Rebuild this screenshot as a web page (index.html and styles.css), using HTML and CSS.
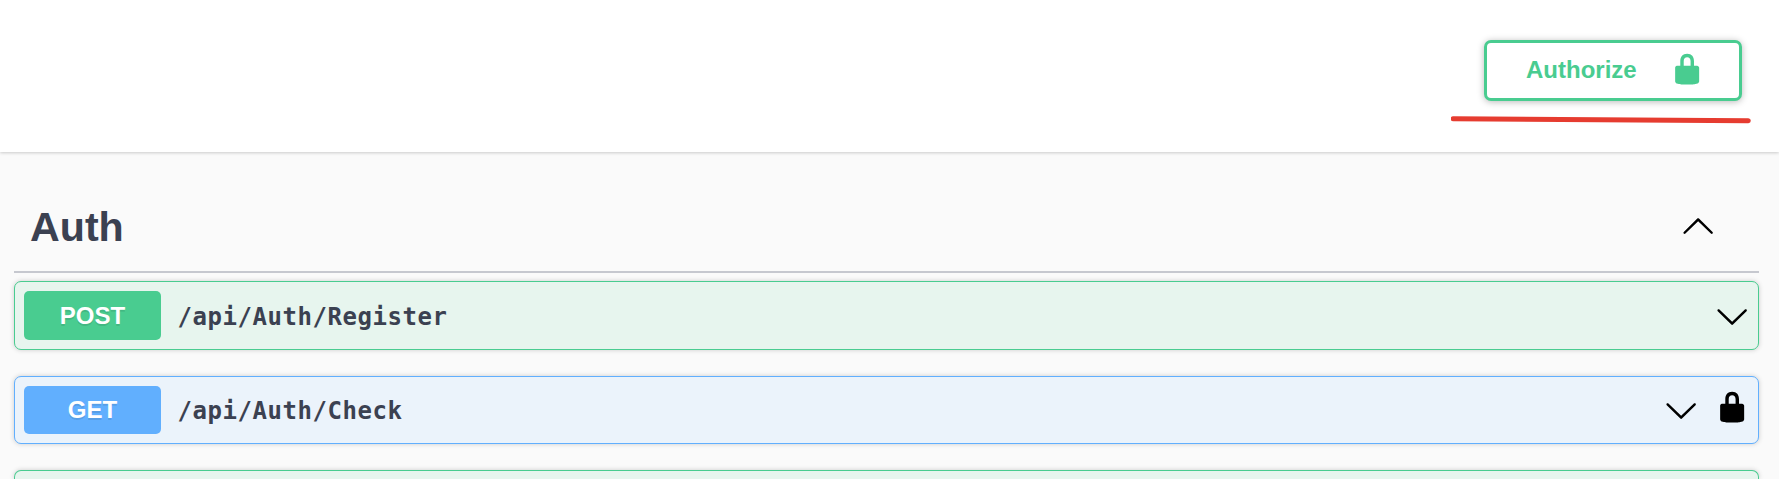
FILE: index.html
```html
<!DOCTYPE html>
<html lang="en">
<head>
<meta charset="utf-8">
<title>API</title>
<link rel="stylesheet" href="styles.css">
</head>
<body>
<svg class="defs" aria-hidden="true">
  <symbol id="lock" viewBox="0 0 20 20"><path d="M15.8 8H14V5.6C14 2.703 12.665 1 10 1 7.334 1 6 2.703 6 5.6V8H4c-.553 0-1 .646-1 1.199V17c0 .549.428 1.139.951 1.307l1.197.387C5.672 18.861 6.55 19 7.1 19h5.8c.549 0 1.428-.139 1.951-.307l1.196-.387c.524-.167.953-.757.953-1.306V9.199C17 8.646 16.352 8 15.8 8zM12 8H8V5.199C8 3.754 8.797 3 10 3c1.203 0 2 .754 2 2.199V8z"/></symbol>
  <symbol id="down" viewBox="0 0 20 20"><path d="M17.418 6.109c.272-.268.709-.268.979 0s.271.701 0 .969l-7.908 7.83c-.27.268-.707.268-.979 0l-7.908-7.83c-.27-.268-.27-.701 0-.969s.709-.268.979 0L10 13.25z"/></symbol>
  <symbol id="up" viewBox="0 0 20 20"><path d="M17.418 14.908c.272.268.709.268.979 0s.271-.701 0-.969l-7.908-7.83c-.27-.268-.707-.268-.979 0l-7.908 7.83c-.27.268-.27.701 0 .969s.709.268.979 0L10 7.767z"/></symbol>
</svg>
<header class="scheme">
  <button class="authorize"><span>Authorize</span><svg class="icon"><use href="#lock"/></svg></button>
  <svg class="underline" viewBox="0 0 300 10"><path d="M2.200 3.800L297.300 5.800"/></svg>
</header>
<main class="section">
  <h3 class="tag"><span>Auth</span><svg class="icon"><use href="#up"/></svg></h3>
  <div class="op post">
    <span class="method">POST</span><span class="path">/api/Auth/Register</span>
    <svg class="icon"><use href="#down"/></svg>
  </div>
  <div class="op get">
    <span class="method">GET</span><span class="path">/api/Auth/Check</span>
    <svg class="icon"><use href="#down"/></svg><svg class="icon lock"><use href="#lock"/></svg>
  </div>
  <div class="op post partial"></div>
</main>
</body>
</html>
```
FILE: styles.css
```css
* { box-sizing: border-box; }
body {
  margin: 0;
  height: 479px;
  overflow: hidden;
  background: #fafafa;
  color: #3b4151;
  font-family: "Liberation Sans", Arial, sans-serif;
}
.defs { position: absolute; width: 0; height: 0; }
.icon { width: 34.3px; height: 34.3px; flex: none; fill: #000; }
.scheme {
  height: 152px;
  padding: 40px 37px 0 0;
  display: flex;
  flex-direction: column;
  align-items: flex-end;
  background: #fff;
  box-shadow: 0 1px 3px rgba(0, 0, 0, .19);
}
.authorize {
  width: 258px;
  height: 61px;
  padding: 0 35px 2px 39px;
  display: flex;
  align-items: center;
  justify-content: space-between;
  border: 3px solid #49cc90;
  border-radius: 7px;
  background: #fff;
  box-shadow: 0 1px 7px rgba(0, 0, 0, .28);
  color: #49cc90;
  font: bold 24px "Liberation Sans", Arial, sans-serif;
}
.authorize .icon { fill: #49cc90; }
.underline {
  width: 300px;
  height: 10px;
  margin: 14px -9px 0 0;
  fill: none;
  stroke: #e63c30;
  stroke-width: 5;
  stroke-linecap: round;
}
.section { padding: 31px 20px 0 14px; }
.tag {
  height: 90px;
  margin: 0 0 8px;
  padding: 0 44px 0 16px;
  display: flex;
  align-items: center;
  justify-content: space-between;
  border-bottom: 2px solid #c6c8cf;
  font-size: 41.2px;
}
.tag .icon { margin-bottom: 3px; }
.op {
  height: 69px;
  margin-bottom: 26px;
  padding: 0 9px;
  display: flex;
  align-items: center;
  border: 1px solid #49cc90;
  border-radius: 7px;
  box-shadow: 0 0 5px rgba(0, 0, 0, .19);
}
.post { background: #e7f5ee; }
.post .icon { margin-top: 2px; }
.get { height: 68px; border-color: #61affe; background: #ebf3fb; }
.partial {
  height: 9px;
  margin: 0;
  border-bottom: 0;
  border-radius: 7px 7px 0 0;
}
.method {
  width: 137px;
  height: 49px;
  border-radius: 5px;
  background: #49cc90;
  color: #fff;
  font-weight: bold;
  font-size: 24px;
  line-height: 49px;
  text-align: center;
  text-shadow: 0 2px 0 rgba(0, 0, 0, .1);
}
.get .method { height: 48px; line-height: 48px; background: #61affe; }
.path {
  flex: 1;
  padding: 1px 0 0 16.5px;
  font: bold 24px "DejaVu Sans Mono", monospace;
  letter-spacing: .55px;
}
.post .path { padding-top: 3px; }
.lock { margin: -6px 0 0 16px; }
```
